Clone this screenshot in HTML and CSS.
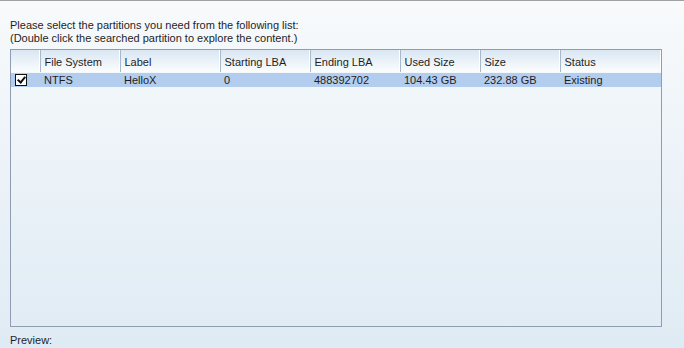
FILE: index.html
```html
<!DOCTYPE html>
<html lang="en">
<head>
    <meta charset="UTF-8">
    <title>Partition list</title>
    <link rel="stylesheet" href="styles.css">
</head>
<body>
    <div class="panel">
        <p class="intro">
            Please select the partitions you need from the following list:<br>
            (Double click the searched partition to explore the content.)
        </p>

        <div class="list-box">
            <table class="part-table">
                <colgroup>
                    <col class="c-check">
                    <col class="c-fs">
                    <col class="c-label">
                    <col class="c-start">
                    <col class="c-end">
                    <col class="c-used">
                    <col class="c-size">
                    <col>
                </colgroup>
                <thead>
                    <tr>
                        <th></th>
                        <th>File System</th>
                        <th>Label</th>
                        <th>Starting LBA</th>
                        <th>Ending LBA</th>
                        <th>Used Size</th>
                        <th>Size</th>
                        <th>Status</th>
                    </tr>
                </thead>
                <tbody>
                    <tr class="selected">
                        <td class="check-cell"><span class="checkbox"></span></td>
                        <td>NTFS</td>
                        <td>HelloX</td>
                        <td>0</td>
                        <td>488392702</td>
                        <td>104.43 GB</td>
                        <td>232.88 GB</td>
                        <td>Existing</td>
                    </tr>
                </tbody>
            </table>
        </div>

        <div class="preview">Preview:</div>
    </div>
</body>
</html>
```

FILE: styles.css
```css
* {
    margin: 0;
    padding: 0;
    box-sizing: border-box;
}

html, body {
    height: 100%;
}

body {
    font-family: "Liberation Sans", Arial, sans-serif;
    font-size: 11px;
    color: #1e1e1e;
    background: linear-gradient(to bottom, #f8fafc 0%, #dfebf4 100%);
    border-top: 1px solid #a0a0a0;
    overflow: hidden;
}

.panel {
    padding: 18px 23px 0 10px;
}

.intro {
    line-height: 13px;
}

.list-box {
    margin-top: 4px;
    width: 652px;
    height: 278px;
    border: 1px solid #8e9cb4;
}

.part-table {
    width: 100%;
    border-collapse: collapse;
    table-layout: fixed;
}

.c-check { width: 29px; }
.c-fs { width: 80px; }
.c-label { width: 100px; }
.c-start { width: 90px; }
.c-end { width: 90px; }
.c-used { width: 80px; }
.c-size { width: 80px; }

.part-table th {
    height: 22px;
    padding: 2px 4px 0;
    text-align: left;
    font-weight: normal;
    background: linear-gradient(to bottom, #d9e6f2 0%, #fbfdfe 100%);
    border-right: 1px solid #a9b9cc;
    border-bottom: 1px solid #f4f8fb;
    box-shadow: inset -1px 0 0 #ffffff;
}

.part-table th:last-child {
    border-right: none;
}

.part-table td {
    height: 14px;
    padding: 0 4px;
    white-space: nowrap;
    line-height: 14px;
}

.selected {
    background: #b3cdef;
}

.check-cell {
    padding-left: 4px;
}

.checkbox {
    position: relative;
    display: block;
    width: 12px;
    height: 12px;
    border: 1px solid #111;
    background: #ffffff;
}

.checkbox::after {
    content: "";
    position: absolute;
    left: 3px;
    top: 0px;
    width: 3px;
    height: 6px;
    border: solid #111;
    border-width: 0 2px 2px 0;
    transform: rotate(40deg);
}

.preview {
    margin-top: 7px;
    padding-left: 0;
}
```
